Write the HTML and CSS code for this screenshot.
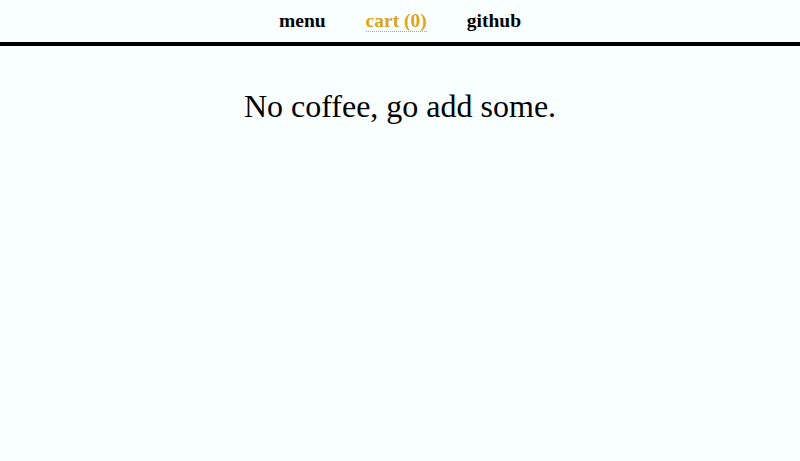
FILE: index.html
```html
<!DOCTYPE html>
<html>
<head>
<meta charset="utf-8">
<link rel="stylesheet" href="styles.css">
</head>
<body>
<header class="nav">
  <a class="nav-link" href="#">menu</a>
  <a class="nav-link active" href="#">cart (0)</a>
  <a class="nav-link" href="#">github</a>
</header>
<main class="content">
  <p class="empty">No coffee, go add some.</p>
</main>
</body>
</html>
```

FILE: styles.css
```css
html, body {
  margin: 0;
  padding: 0;
  background: #f9ffff;
  font-family: "Liberation Serif", "Times New Roman", serif;
  color: #000;
}
.nav {
  display: flex;
  justify-content: center;
  gap: 40px;
  padding: 10px 0 10px;
  border-bottom: 4px solid #000;
}
.nav-link {
  font-size: 19.5px;
  font-weight: bold;
  color: #000;
  text-decoration: none;
  line-height: 22px;
}
.nav-link.active {
  color: #daa520;
  border-bottom: 1px dotted #daa520;
  line-height: 21px;
}
.content {
  text-align: center;
}
.empty {
  font-size: 32px;
  margin: 42px 0 0;
  line-height: 37px;
}
```
